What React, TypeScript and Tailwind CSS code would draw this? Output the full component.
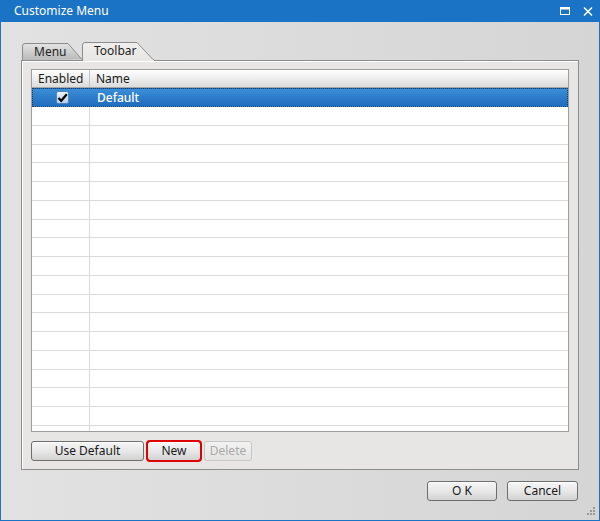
import React from 'react';

const font = { fontFamily: '"Segoe UI", "Noto Sans", sans-serif' };

function Tab({ label, active }: { label: string; active?: boolean }) {
  const w = active ? 72 : 62;
  const h = active ? 19 : 17;
  return (
    <div className={`relative flex items-start ${active ? 'h-[19px] w-[72px] z-10 -mb-px' : 'h-[17px] w-[62px] -mr-[2px]'}`}>
      <svg className="absolute inset-0" width={w} height={h} viewBox={`0 0 ${w} ${h}`}>
        <defs>
          <linearGradient id={`tg-${label}`} x1="0" y1="0" x2="0" y2="1">
            <stop offset="0" stopColor={active ? '#f1efed' : '#e4e4e4'} />
            <stop offset="1" stopColor={active ? '#e8e6e4' : '#b9b9b9'} />
          </linearGradient>
        </defs>
        {active ? (
          <>
            <path d="M0.5 19 V3 Q0.5 0.5 3 0.5 H55 L71 17.5 H72 V19 Z" fill={`url(#tg-${label})`} />
            <path d="M0.5 19 V3 Q0.5 0.5 3 0.5 H55 L71 17.5 H72" fill="none" stroke="#8c8c8c" />
          </>
        ) : (
          <path d="M0.5 17 V3 Q0.5 0.5 3 0.5 H46 L60 16.5" fill={`url(#tg-${label})`} stroke="#8c8c8c" />
        )}
      </svg>
      <span className="relative text-[12px] leading-none text-[#1e1e1e] pl-[12px] pt-[3px]">{label}</span>
    </div>
  );
}

function Btn({ label, w, disabled, red }: { label: string; w: string; disabled?: boolean; red?: boolean }) {
  return (
    <div className={`${w} relative h-[20px] flex items-center justify-center rounded-[3px] text-[12px] leading-none ${disabled ? 'border border-[#c6c6c6] bg-gradient-to-b from-[#f2f2f2] to-[#e4e4e4] text-[#a8a8a8]' : 'border border-[#6e6e6e] bg-gradient-to-b from-[#f6f6f6] via-[#e8e8e8] to-[#d2d2d2] text-[#1a1a1a] shadow-[inset_0_1px_0_#ffffff]'} ${red ? 'outline-2 outline-[#e00000] -outline-offset-1 rounded-[2px]' : ''}`}>
      {label}
    </div>
  );
}

export default function App() {
  const rows = Array.from({ length: 19 });
  return (
    <div style={font} className="w-[600px] h-[521px] flex flex-col overflow-hidden border-x border-b border-[#1a73c4] relative">
      <div className="h-[22px] -mx-px bg-[#1a73c4] flex items-center pl-[14px] pr-[6px] shrink-0">
        <span className="text-white text-[12px] leading-none">Customize Menu</span>
        <div className="ml-auto flex items-center gap-[13px] pr-[1px]">
          <svg width="10" height="8" viewBox="0 0 10 8">
            <rect x="0.5" y="0.5" width="9" height="7" fill="none" stroke="#fff" />
            <rect x="0" y="0" width="10" height="2.5" fill="#fff" />
          </svg>
          <svg width="10" height="9" viewBox="0 0 10 9">
            <path d="M1 0.5 L9 8.5 M9 0.5 L1 8.5" stroke="#fff" strokeWidth="1.5" />
          </svg>
        </div>
      </div>
      <div className="flex-1 flex flex-col bg-gradient-to-r from-[#e2e2e2] to-[#d5d5d5] pl-[20px] pr-[20px] pt-[20px]">
        <div className="flex items-end h-[18px] pl-[1px]">
          <Tab label="Menu" />
          <Tab label="Toolbar" active />
        </div>
        <div className="h-[410px] border border-[#8c8c8c] bg-[#e8e6e4] shadow-[inset_1px_1px_0_#ffffff] px-[9px] pt-[8px] pb-[8px] flex flex-col">
          <div className="h-[364px] border border-[#9c9c9c] bg-white overflow-hidden">
            <div className="h-[18px] flex border-b border-[#a6a6a6] bg-gradient-to-b from-[#ffffff] to-[#dcdcdc] text-[12px] text-[#1a1a1a]">
              <div className="w-[58px] border-r border-[#c4c4c4] flex items-center pl-[6px]">Enabled</div>
              <div className="flex-1 flex items-center pl-[6px]">Name</div>
            </div>
            <div className="h-[19px] flex border border-dotted border-[#1c3f6a] bg-gradient-to-b from-[#3a8ed6] to-[#1f6cbd] text-white text-[12px]">
              <div className="w-[58px] flex items-center justify-center pl-[1px]">
                <div className="w-[13px] h-[13px] rounded-[2px] border border-[#4f86bd] bg-gradient-to-b from-[#eaf2fb] to-[#b4cfeb] flex items-center justify-center">
                  <svg width="11" height="10" viewBox="0 0 11 10">
                    <path d="M1.5 5 L4.2 7.8 L9.8 1.2" fill="none" stroke="#000" strokeWidth="2.2" />
                  </svg>
                </div>
              </div>
              <div className="flex-1 flex items-center pl-[6px] font-medium">Default</div>
            </div>
            {rows.map((_, i) => (
              <div key={i} className="h-[18.75px] flex border-b border-[#dadada]">
                <div className="w-[58px] border-r border-[#dadada]" />
                <div className="flex-1" />
              </div>
            ))}
          </div>
          <div className="flex gap-[3px] mt-[9px]">
            <Btn label="Use Default" w="w-[113px]" />
            <Btn label="New" w="w-[54px]" red />
            <Btn label="Delete" w="w-[48px]" disabled />
          </div>
        </div>
        <div className="flex justify-end gap-[10px] mt-[11px] pr-[1px]">
          <Btn label="O K" w="w-[70px]" />
          <Btn label="Cancel" w="w-[71px]" />
        </div>
      </div>
      <svg className="absolute right-[4px] bottom-[4px]" width="10" height="10" viewBox="0 0 10 10">
        {[[8, 1], [5, 4], [8, 4], [2, 7], [5, 7], [8, 7]].map(([x, y], i) => (
          <rect key={i} x={x} y={y} width="2" height="2" fill="#9a9a9a" />
        ))}
      </svg>
    </div>
  );
}
